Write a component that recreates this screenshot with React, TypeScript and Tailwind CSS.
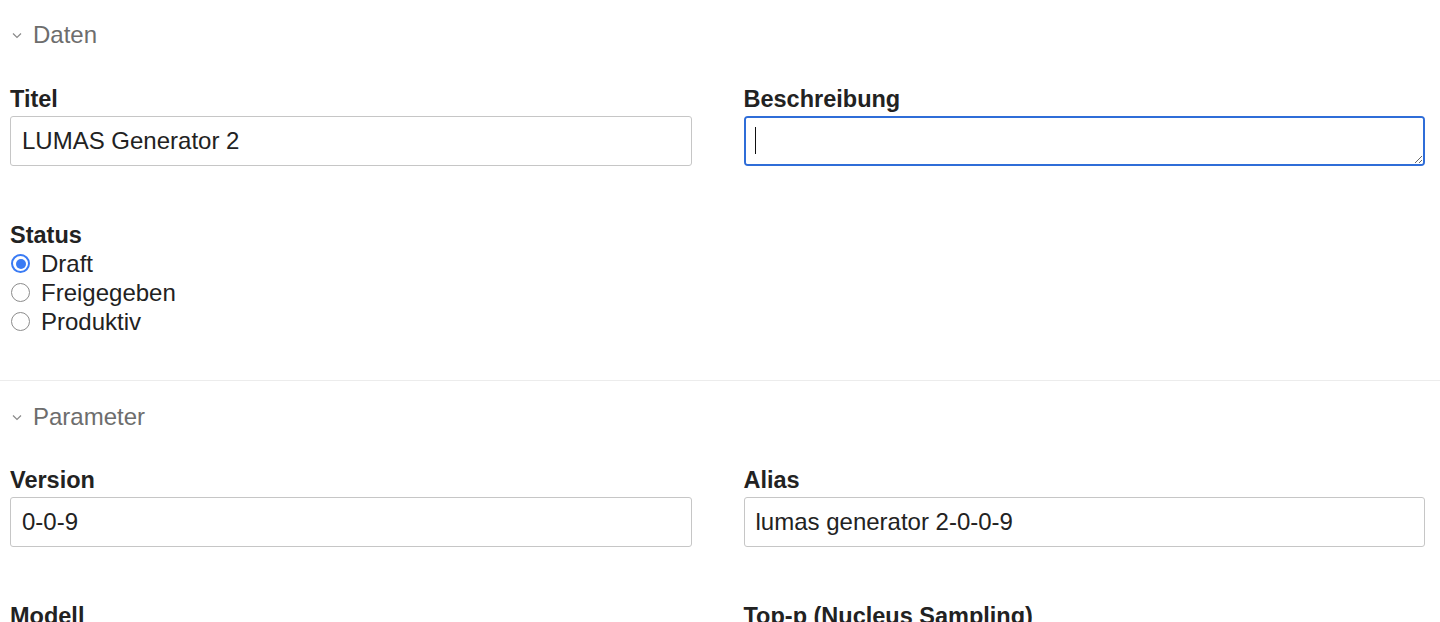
import React, { useState } from 'react';

const Chevron: React.FC = () => (
    <svg width="10" height="7" viewBox="0 0 10 7" className="mr-[11px] ml-[2px]">
        <path d="M1 1.5 L5 5.5 L9 1.5" fill="none" stroke="#8a8a8a" strokeWidth="1.2" />
    </svg>
);

const SectionHeader: React.FC<{ title: string }> = ({ title }) => (
    <button type="button" className="flex items-center h-[26px] leading-[26px] text-[24px] text-[#6d6d6d]">
        <Chevron />
        <span>{title}</span>
    </button>
);

const Field: React.FC<{ label: string; value: string }> = ({ label, value }) => (
    <div>
        <label className="block h-[28px] leading-[28px] text-[23.5px] font-bold text-[#222]">{label}</label>
        <input
            type="text"
            defaultValue={value}
            className="mt-[3px] w-full h-[50px] px-[11px] border border-[#c6c6c6] rounded-[3px] text-[24px] text-[#222] bg-white outline-none"
        />
    </div>
);

const Radio: React.FC<{ label: string; checked: boolean; onClick: () => void }> = ({ label, checked, onClick }) => (
    <div className="flex items-center h-[29px] cursor-pointer" onClick={onClick}>
        {checked ? (
            <span className="ml-[1px] w-[19px] h-[19px] rounded-full border-[2px] border-[#3a7bf4] flex items-center justify-center">
                <span className="w-[10px] h-[10px] rounded-full bg-[#3a7bf4]" />
            </span>
        ) : (
            <span className="ml-[1px] w-[19px] h-[19px] rounded-full border-[1.5px] border-[#8c8c8c]" />
        )}
        <span className="ml-[11px] text-[24px] text-[#222] leading-[29px]">{label}</span>
    </div>
);

const App: React.FC = () => {
    const [status, setStatus] = useState('Draft');

    return (
        <div className="min-h-screen bg-white pl-[10px] pr-[15px] pt-[22px]" style={{ fontFamily: '"Liberation Sans", Arial, sans-serif' }}>
            <SectionHeader title="Daten" />

            <div className="grid grid-cols-2 gap-x-[52px] mt-[37px]">
                <Field label="Titel" value="LUMAS Generator 2" />
                <div>
                    <label className="block h-[28px] leading-[28px] text-[23.5px] font-bold text-[#222]">Beschreibung</label>
                    <div className="relative mt-[3px]">
                        <textarea
                            className="block w-full h-[50px] px-[11px] py-[8px] border-[2px] border-[#2f6dd8] rounded-[4px] text-[24px] text-[#222] bg-white outline-none resize-y"
                        />
                        <span className="absolute left-[11px] top-[11px] w-[1.5px] h-[27px] bg-[#111]" />
                    </div>
                </div>
            </div>

            <div className="mt-[55px]">
                <div className="h-[28px] leading-[28px] text-[23.5px] font-bold text-[#222]">Status</div>
                {['Draft', 'Freigegeben', 'Produktiv'].map((s) => (
                    <Radio key={s} label={s} checked={status === s} onClick={() => setStatus(s)} />
                ))}
            </div>

            <div className="mt-[44px] -ml-[10px] -mr-[15px] border-t border-[#ececec]" />

            <div className="mt-[23px]">
                <SectionHeader title="Parameter" />
            </div>

            <div className="grid grid-cols-2 gap-x-[52px] mt-[36px]">
                <Field label="Version" value="0-0-9" />
                <Field label="Alias" value="lumas generator 2-0-0-9" />
            </div>

            <div className="grid grid-cols-2 gap-x-[52px] mt-[55px]">
                <Field label="Modell" value="" />
                <Field label="Top-p (Nucleus Sampling)" value="" />
            </div>
        </div>
    );
};

export default App;
